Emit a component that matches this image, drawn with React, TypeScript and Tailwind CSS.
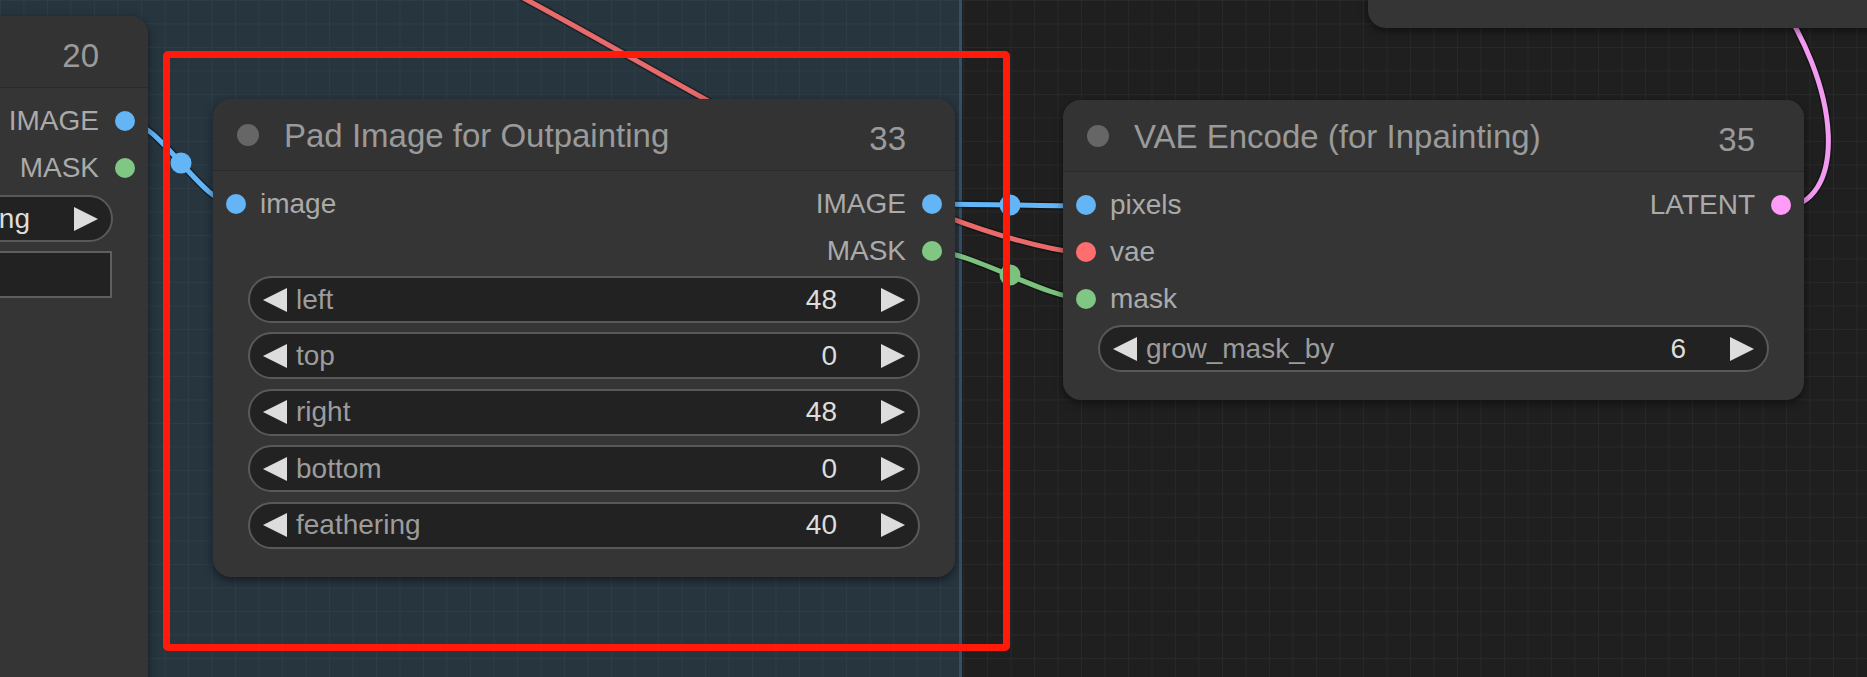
import React from "react";

type SlotProps = {
  inLabel?: string;
  inColor?: string;
  outLabel?: string;
  outColor?: string;
};

function Slot({ inLabel, inColor, outLabel, outColor }: SlotProps) {
  return (
    <div className="flex h-[47px] items-center">
      {inLabel ? (
        <>
          <div className={`ml-[13px] h-[20px] w-[20px] shrink-0 rounded-full ${inColor}`} />
          <span className="ml-[14px] whitespace-nowrap text-[28px] leading-none text-[#aaaaaa]">{inLabel}</span>
        </>
      ) : null}
      {outLabel ? (
        <>
          <span className="ml-auto whitespace-nowrap text-[28px] leading-none text-[#aaaaaa]">{outLabel}</span>
          <div className={`ml-[16px] mr-[13px] h-[20px] w-[20px] shrink-0 rounded-full ${outColor}`} />
        </>
      ) : null}
    </div>
  );
}

function LeftArrow() {
  return (
    <svg width="24" height="24" viewBox="0 0 10 10" className="shrink-0">
      <path d="M10 0 L0 5 L10 10 Z" fill="#dddddd" />
    </svg>
  );
}

function RightArrow() {
  return (
    <svg width="24" height="24" viewBox="0 0 10 10" className="ml-[44px] shrink-0">
      <path d="M0 0 L10 5 L0 10 Z" fill="#dddddd" />
    </svg>
  );
}

function NumberWidget({ label, value }: { label: string; value: string }) {
  return (
    <div className="mx-[35px] flex h-[47px] items-center rounded-full border-2 border-[#595959] bg-[#222222] px-[13px]">
      <LeftArrow />
      <span className="ml-[9px] whitespace-nowrap text-[28px] leading-none text-[#9c9c9c]">{label}</span>
      <span className="ml-auto whitespace-nowrap text-[28px] leading-none text-[#dddddd]">{value}</span>
      <RightArrow />
    </div>
  );
}

function Header({ title, id }: { title: string; id: string }) {
  return (
    <div className="flex h-[72px] items-center border-b border-[#2a2a2a] bg-[#333333] pl-[24px] pr-[49px]">
      <div className="h-[22px] w-[22px] shrink-0 rounded-full bg-[#666666]" />
      <span className="ml-[25px] mt-[1px] whitespace-nowrap text-[33px] leading-none text-[#9a9a9a]">{title}</span>
      <span className="ml-auto mt-[7px] text-[33px] leading-none text-[#9a9a9a]">{id}</span>
    </div>
  );
}

export default function App() {
  return (
    <div className="relative h-[677px] w-[1867px] overflow-hidden bg-[#1f1f1f] font-['Liberation_Sans',Arial,sans-serif] [background-image:linear-gradient(to_right,#282828_1px,transparent_1px),linear-gradient(to_bottom,#282828_1px,transparent_1px)] [background-size:23.5px_23.5px]">
      {/* group area */}
      <div className="absolute left-[-200px] top-[-200px] h-[1100px] w-[1162px] border-r-[3px] border-[#33506a] bg-[rgba(63,120,158,0.25)]" />

      {/* links */}
      <svg className="absolute left-0 top-0" width="1867" height="677" viewBox="0 0 1867 677">
        <g fill="none" strokeLinecap="round">
          <path d="M470 -30 C650 60, 900 232, 1086 254" stroke="rgba(0,0,0,0.35)" strokeWidth="8" />
          <path d="M470 -30 C650 60, 900 232, 1086 254" stroke="#e86a6a" strokeWidth="5" />
          <path d="M126 121 C160.6 121, 201.4 205, 236 205" stroke="rgba(0,0,0,0.35)" strokeWidth="8" />
          <path d="M126 121 C160.6 121, 201.4 205, 236 205" stroke="#64b5f6" strokeWidth="5" />
          <path d="M932 204 C970 204, 1048 206, 1086 206" stroke="rgba(0,0,0,0.35)" strokeWidth="8" />
          <path d="M932 204 C970 204, 1048 206, 1086 206" stroke="#64b5f6" strokeWidth="5" />
          <path d="M932 251 C972 251, 1046 299, 1086 299" stroke="rgba(0,0,0,0.35)" strokeWidth="8" />
          <path d="M932 251 C972 251, 1046 299, 1086 299" stroke="#7cc27f" strokeWidth="5" />
          <path d="M1782 207 C1845 207, 1848 90, 1765 -20" stroke="rgba(0,0,0,0.35)" strokeWidth="8" />
          <path d="M1782 207 C1845 207, 1848 90, 1765 -20" stroke="#f29af0" strokeWidth="5" />
        </g>
        <circle cx="181" cy="163" r="10.5" fill="#64b5f6" />
        <circle cx="1010" cy="205" r="10.5" fill="#64b5f6" />
        <circle cx="1010" cy="275" r="10.5" fill="#7cc27f" />
      </svg>

      {/* left node (Load Image, id 20) */}
      <div className="absolute left-[-700px] top-[16px] h-[800px] w-[848px] overflow-hidden rounded-[18px] bg-[#353535] shadow-[0_3px_8px_rgba(0,0,0,0.5)]">
        <Header title="Load Image" id="20" />
        <div className="flex flex-col pt-[9px]">
          <Slot outLabel="IMAGE" outColor="bg-[#64b5f6]" />
          <Slot outLabel="MASK" outColor="bg-[#81c784]" />
          <div className="mt-[4px]">
            <NumberWidget label="image" value="yosemite_outpaint_example.png" />
          </div>
          <div className="mx-[36px] mt-[9.4px] flex h-[47px] items-center justify-center border-2 border-[#5f5f5f] bg-[#222222] text-[28px] leading-none text-[#dddddd]">
            choose file to upload
          </div>
        </div>
      </div>

      {/* Pad Image for Outpainting, id 33 */}
      <div className="absolute left-[213px] top-[99px] w-[742px] overflow-hidden rounded-[18px] bg-[#353535] shadow-[0_3px_8px_rgba(0,0,0,0.5)]">
        <Header title="Pad Image for Outpainting" id="33" />
        <div className="flex flex-col pb-[28px] pt-[9px]">
          <Slot inLabel="image" inColor="bg-[#64b5f6]" outLabel="IMAGE" outColor="bg-[#64b5f6]" />
          <Slot outLabel="MASK" outColor="bg-[#81c784]" />
          <div className="mt-[2px] flex flex-col gap-[9.4px]">
            <NumberWidget label="left" value="48" />
            <NumberWidget label="top" value="0" />
            <NumberWidget label="right" value="48" />
            <NumberWidget label="bottom" value="0" />
            <NumberWidget label="feathering" value="40" />
          </div>
        </div>
      </div>

      {/* VAE Encode (for Inpainting), id 35 */}
      <div className="absolute left-[1063px] top-[100px] w-[741px] overflow-hidden rounded-[18px] bg-[#353535] shadow-[0_3px_8px_rgba(0,0,0,0.5)]">
        <Header title="VAE Encode (for Inpainting)" id="35" />
        <div className="flex flex-col pb-[28px] pt-[9px]">
          <Slot inLabel="pixels" inColor="bg-[#64b5f6]" outLabel="LATENT" outColor="bg-[#ff9cf9]" />
          <Slot inLabel="vae" inColor="bg-[#ff6e6e]" />
          <Slot inLabel="mask" inColor="bg-[#81c784]" />
          <div className="mt-[3px]">
            <NumberWidget label="grow_mask_by" value="6" />
          </div>
        </div>
      </div>

      {/* top-right node (partly visible) */}
      <div className="absolute left-[1368px] top-[-300px] h-[328px] w-[600px] rounded-[18px] bg-[#353535] shadow-[0_3px_8px_rgba(0,0,0,0.5)]" />

      {/* red annotation frame */}
      <div className="absolute left-[163px] top-[51px] h-[600px] w-[847px] rounded-[5px] border-[7px] border-[#ff1a0a]" />
    </div>
  );
}
